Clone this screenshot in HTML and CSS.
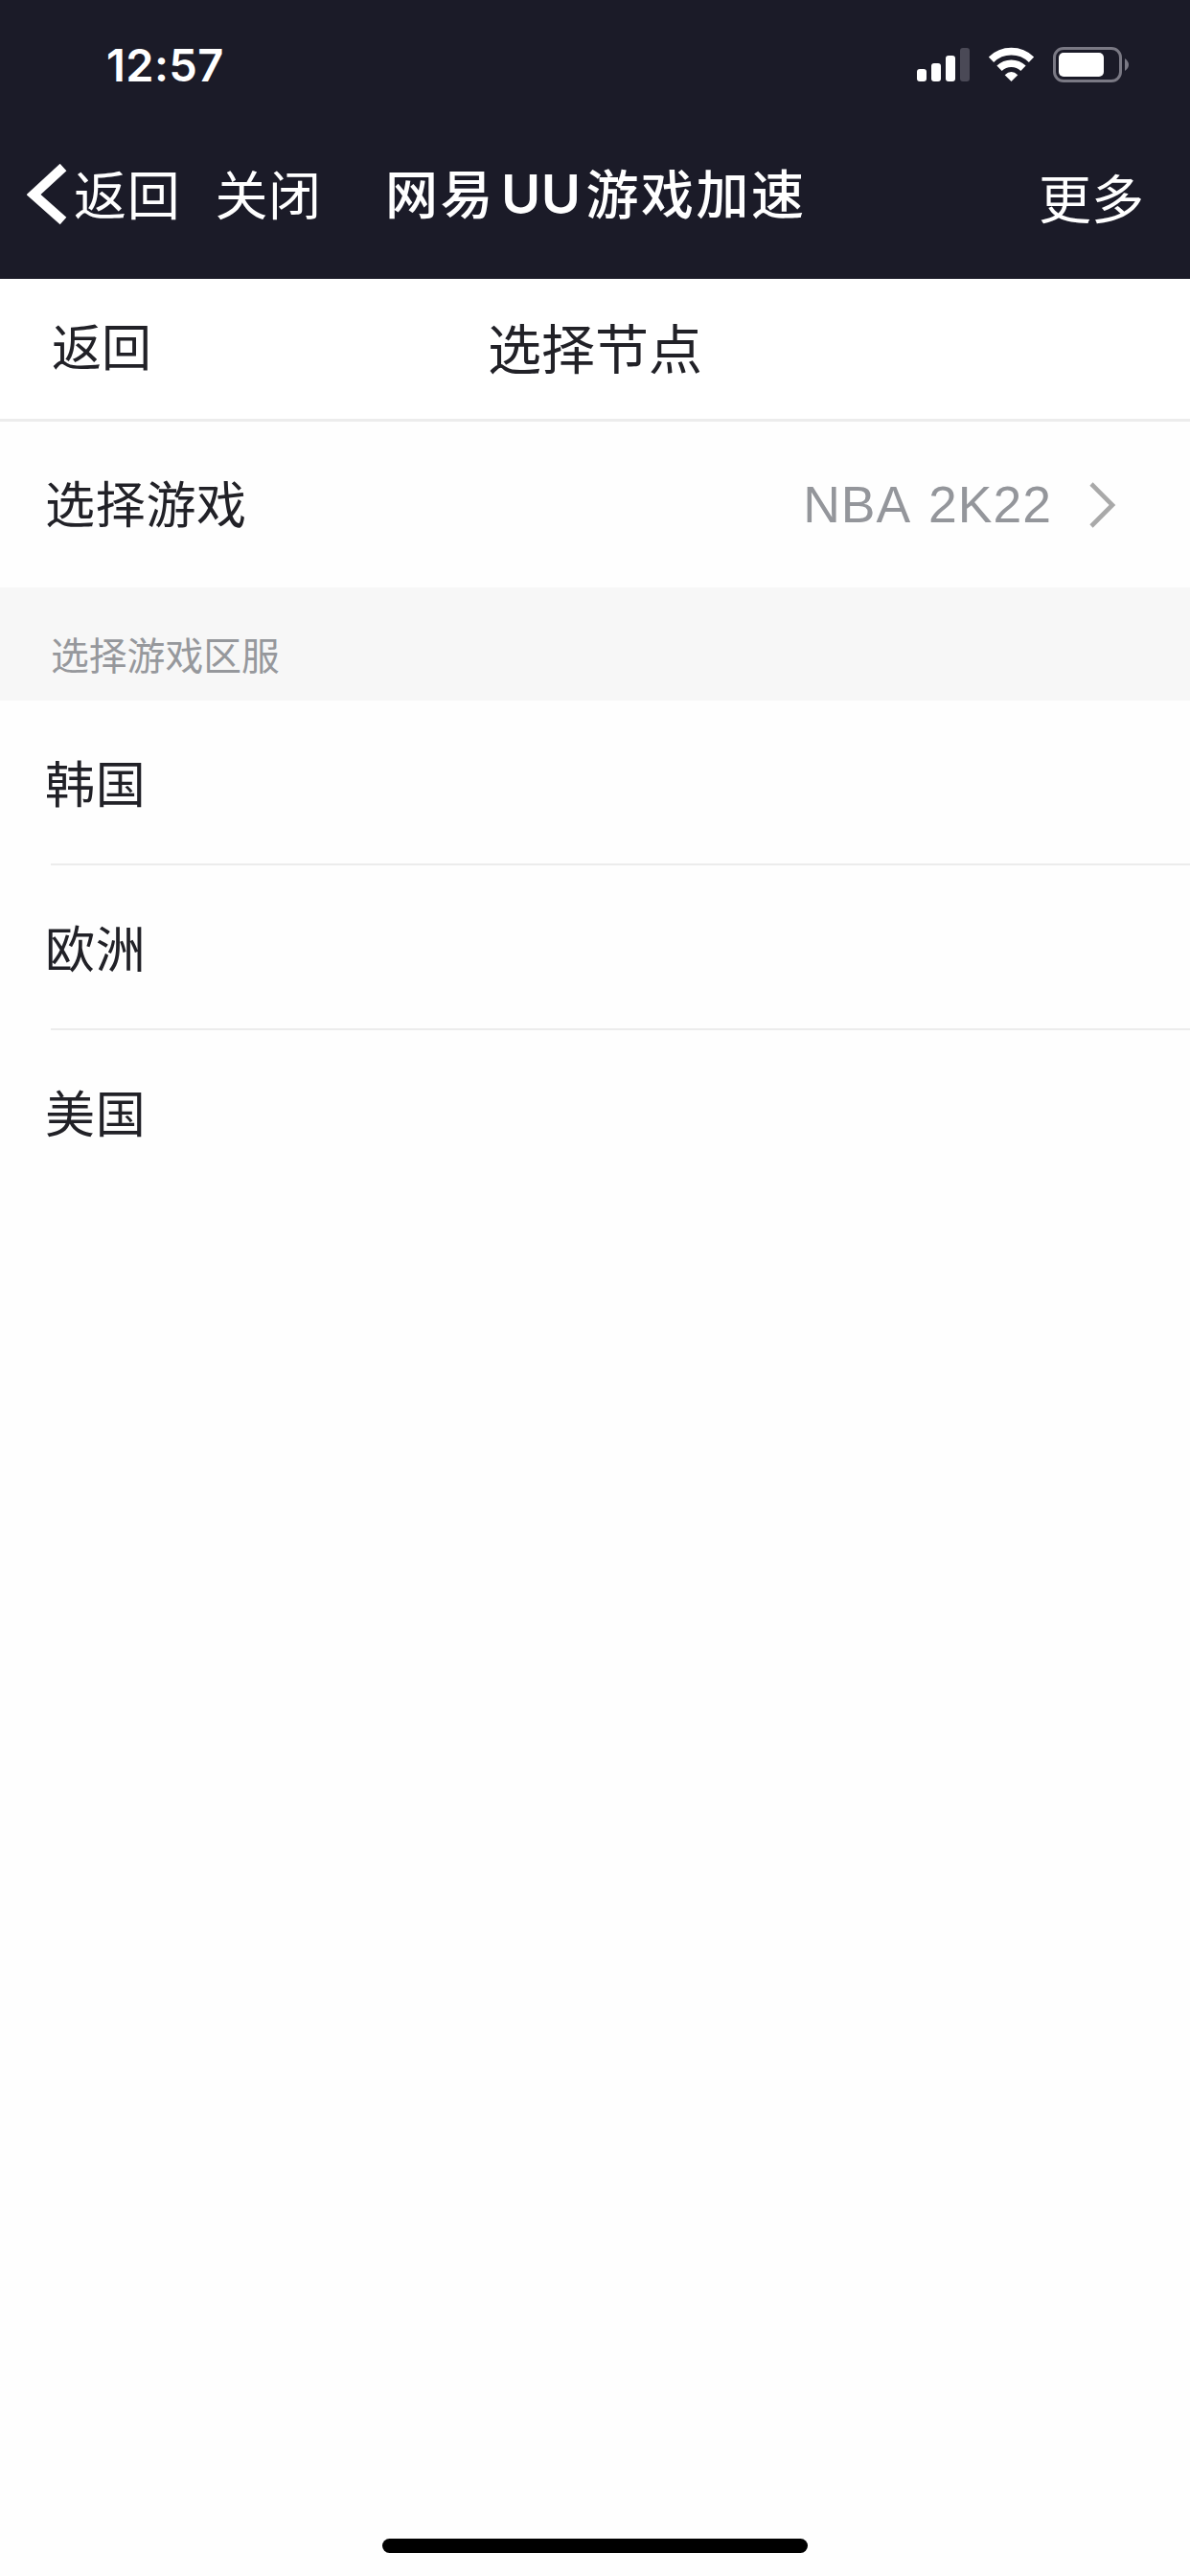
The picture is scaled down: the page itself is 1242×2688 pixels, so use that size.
FILE: index.html
```html
<!DOCTYPE html>
<html lang="zh-CN">
<head>
    <meta charset="UTF-8">
    <title>网易 UU游戏加速</title>
    <link rel="stylesheet" href="styles.css">
</head>
<body>

    <header class="app-header">
        <div class="status-bar">
            <span class="time">12:57</span>
            <svg class="status-icons" width="222" height="38" viewBox="0 0 222 38">
                <!-- signal -->
                <g fill="#fff">
                    <rect x="0" y="23" width="10" height="13" rx="3"/>
                    <rect x="15" y="17" width="10" height="19" rx="3"/>
                    <rect x="30" y="9" width="10" height="27" rx="3"/>
                    <rect x="45" y="1" width="10" height="35" rx="3" fill="#4a4956"/>
                </g>
                <!-- wifi -->
                <g fill="none" stroke="#fff" stroke-width="7.6">
                    <path d="M77.5 13.2 A30 30 0 0 1 119.5 13.2"/>
                    <path d="M86 22.3 A18 18 0 0 1 111 22.3"/>
                </g>
                <path d="M98.5 36 L91.7 29.2 Q98.5 22.8 105.3 29.2 Z" fill="#fff"/>
                <!-- battery -->
                <rect x="143.5" y="1.5" width="69" height="34" rx="9.5" fill="none" stroke="#7a7984" stroke-width="3"/>
                <rect x="148" y="6" width="47" height="25" rx="5" fill="#fff"/>
                <path d="M217 12 Q221 15 221 18.5 Q221 22 217 25 Z" fill="#7a7984"/>
            </svg>
        </div>
        <div class="title-bar">
            <div class="title-left">
                <svg class="back-icon" width="44" height="64" viewBox="0 0 44 64">
                    <path d="M38 3.5 L7 32 L38 59.5" fill="none" stroke="#fff" stroke-width="10"/>
                </svg>
                <span class="back">返回</span>
                <span class="close">关闭</span>
            </div>
            <h1 class="title">网易<span class="uu">UU</span>游戏加速</h1>
            <span class="more">更多</span>
        </div>
    </header>

    <nav class="page-nav">
        <span class="page-back">返回</span>
        <h2 class="page-title">选择节点</h2>
    </nav>

    <div class="game-row">
        <span class="game-label">选择游戏</span>
        <span class="game-name">NBA 2K22</span>
        <svg class="arrow-icon" width="28" height="48" viewBox="0 0 28 48">
            <path d="M2 2 L24 24 L2 46" fill="none" stroke="#a9a9a9" stroke-width="4.6"/>
        </svg>
    </div>

    <div class="section-head">选择游戏区服</div>

    <ul class="region-list">
        <li class="region">韩国</li>
        <li class="region">欧洲</li>
        <li class="region">美国</li>
    </ul>

    <div class="home-indicator"></div>

</body>
</html>
```
FILE: styles.css
```css
* {
    box-sizing: border-box;
}
body {
    margin: 0;
    height: 2688px;
    display: flex;
    flex-direction: column;
    background-color: #fefefe;
    color: #212127;
    font-family: "Noto Sans CJK SC", sans-serif;
    overflow: hidden;
}
h1, h2, ul {
    margin: 0;
    padding: 0;
    font-weight: normal;
}
.app-header {
    height: 291px;
    background-color: #1b1b28;
    color: #fff;
}
.status-bar {
    height: 136px;
    padding: 0 63px 0 111px;
    display: flex;
    justify-content: space-between;
    align-items: center;
}
.time {
    font-family: Inter, sans-serif;
    font-weight: 600;
    font-size: 47px;
    line-height: 60px;
    letter-spacing: 0.4px;
}
.title-bar {
    height: 135px;
    padding: 0 49px 0 28px;
    display: grid;
    grid-template-columns: 374px 1fr 109px;
    align-items: center;
    font-size: 55px;
    line-height: 80px;
    white-space: nowrap;
}
.title-left {
    display: flex;
    align-items: center;
}
.back-icon {
    margin-bottom: 2px;
}
.back, .close {
    padding-bottom: 8px;
    letter-spacing: 0.7px;
}
.back {
    margin-left: 5px;
}
.close {
    margin-left: 36px;
}
.title {
    padding-bottom: 6px;
    font-size: 55px;
    font-weight: 500;
    letter-spacing: 2.5px;
}
.uu {
    margin: 0 5px 0 6px;
    font-family: Inter, sans-serif;
    font-size: 56px;
    font-weight: 600;
    letter-spacing: 0.5px;
}
.page-nav {
    height: 149px;
    padding: 0 54px 8px;
    display: grid;
    grid-template-columns: 1fr auto 1fr;
    align-items: center;
    border-bottom: 3px solid #ececec;
    background-color: #fff;
}
.page-back {
    padding-bottom: 2px;
    font-size: 52px;
}
.page-title {
    font-size: 56px;
}
.game-row {
    height: 173px;
    padding: 0 77px 0 47px;
    display: flex;
    align-items: center;
    font-size: 52px;
}
.game-label {
    flex: 1;
    padding-bottom: 6px;
    letter-spacing: 0.7px;
}
.game-name {
    margin-right: 39px;
    font-family: "Liberation Sans", Arial, sans-serif;
    font-size: 53.5px;
    letter-spacing: 1px;
    word-spacing: 5px;
    color: #94969b;
}
.section-head {
    height: 118px;
    padding: 27px 53px 0;
    font-size: 39.8px;
    line-height: 84px;
    color: #96989c;
    background-color: #f7f7f7;
}
.region-list {
    list-style: none;
    padding-left: 53px;
}
.region {
    height: 172px;
    font-size: 52px;
    line-height: 169px;
    letter-spacing: 0.7px;
    text-indent: -6px;
    border-bottom: 2px solid #ececec;
}
.region:last-child {
    border-bottom: none;
}
.home-indicator {
    width: 444px;
    height: 15px;
    margin: auto auto 24px;
    border-radius: 8px;
    background-color: #000;
}
```
